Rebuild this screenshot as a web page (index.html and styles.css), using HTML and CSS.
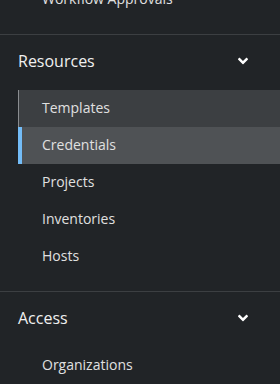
FILE: index.html
```html
<!DOCTYPE html>
<html lang="en">
<head>
  <meta charset="UTF-8" />
  <meta name="viewport" content="width=device-width, initial-scale=1.0"/>
  <title>Navigation</title>
  <link rel="stylesheet" href="styles.css">
</head>
<body>
  <nav class="nav">
    <section class="group">
      <ul class="subnav">
        <li><a class="link" href="#">Workflow Approvals</a></li>
      </ul>
    </section>

    <section class="group">
      <button class="toggle">
        <span>Resources</span>
        <svg class="chevron" viewBox="0 0 320 512" width="10" height="16"><path fill="currentColor" d="M143 352.3L7 216.3c-9.4-9.4-9.4-24.6 0-33.9l22.6-22.6c9.4-9.4 24.6-9.4 33.9 0l96.4 96.4 96.4-96.4c9.4-9.4 24.6-9.4 33.9 0l22.6 22.6c9.4 9.4 9.4 24.6 0 33.9l-136 136c-9.2 9.4-24.4 9.4-33.8 0z"/></svg>
      </button>
      <ul class="subnav">
        <li><a class="link hover" href="#">Templates</a></li>
        <li><a class="link current" href="#">Credentials</a></li>
        <li><a class="link" href="#">Projects</a></li>
        <li><a class="link" href="#">Inventories</a></li>
        <li><a class="link" href="#">Hosts</a></li>
      </ul>
    </section>

    <section class="group">
      <button class="toggle">
        <span>Access</span>
        <svg class="chevron" viewBox="0 0 320 512" width="10" height="16"><path fill="currentColor" d="M143 352.3L7 216.3c-9.4-9.4-9.4-24.6 0-33.9l22.6-22.6c9.4-9.4 24.6-9.4 33.9 0l96.4 96.4 96.4-96.4c9.4-9.4 24.6-9.4 33.9 0l22.6 22.6c9.4 9.4 9.4 24.6 0 33.9l-136 136c-9.2 9.4-24.4 9.4-33.8 0z"/></svg>
      </button>
      <ul class="subnav">
        <li><a class="link" href="#">Organizations</a></li>
      </ul>
    </section>
  </nav>
</body>
</html>
```

FILE: styles.css
```css
html, body {
  margin: 0;
  padding: 0;
  background-color: #212427;
}
body {
  font-family: 'Open Sans', sans-serif;
  width: 280px;
  height: 384px;
  overflow: hidden;
}
.nav {
  margin-top: -19px;
}
.group {
  padding-bottom: 16px;
  border-bottom: 1px solid #3c3f42;
}
.toggle {
  display: flex;
  align-items: center;
  justify-content: space-between;
  width: 100%;
  padding: 14px 32px 17px 18px;
  margin: 0;
  background: none;
  border: none;
  color: #f0f0f0;
  font-family: inherit;
  font-size: 16px;
  line-height: 24px;
  text-align: left;
}
.chevron {
  color: #fff;
}
.subnav {
  list-style: none;
  margin: 0 0 0 18px;
  padding: 0;
}
.link {
  display: block;
  height: 37px;
  line-height: 35px;
  padding-left: 24px;
  color: #e0e0e0;
  font-size: 14px;
  text-decoration: none;
}
.link.hover {
  background-color: #3c3f42;
  box-shadow: inset 1px 0 0 #8a8d90;
}
.link.current {
  background-color: #4f5255;
  box-shadow: inset 4px 0 0 #73bcf7;
}
```
